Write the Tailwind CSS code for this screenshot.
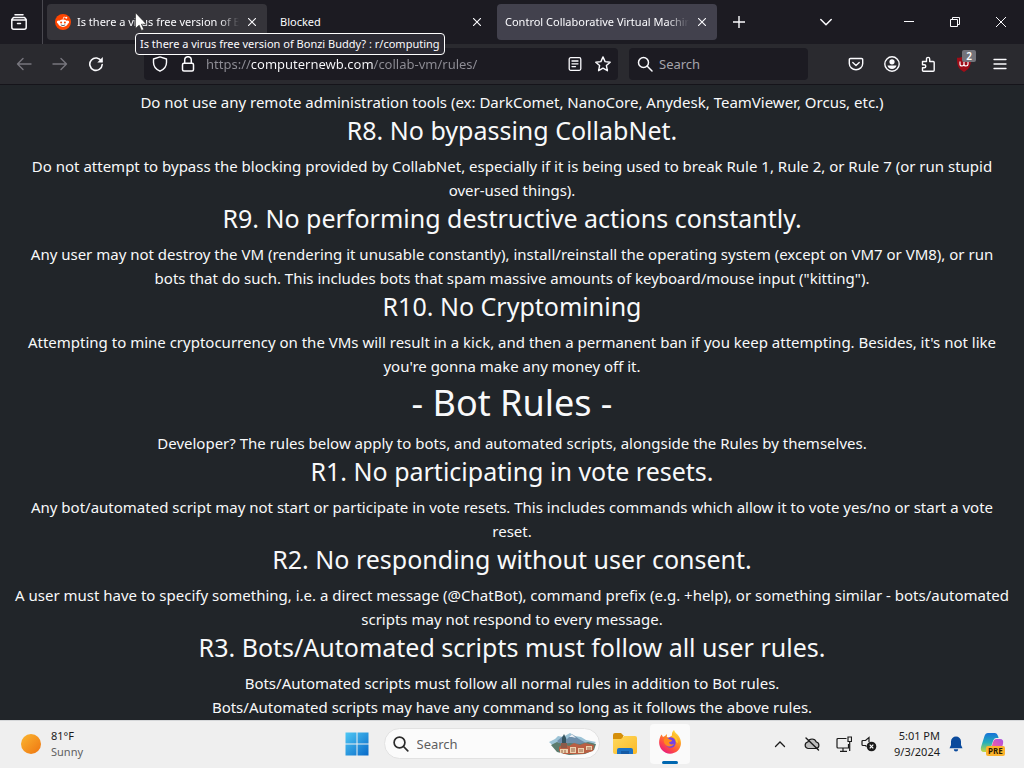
<!DOCTYPE html>
<html lang="en">
<head>
    <meta charset="UTF-8">
    <meta name="viewport" content="width=device-width, initial-scale=1.0">
    <title>Control Collaborative Virtual Machines</title>
    <script src="https://cdn.jsdelivr.net/npm/@tailwindcss/browser@4"></script>
</head>
<body class="h-screen flex flex-col overflow-hidden bg-[#212529] font-['Noto_Sans',sans-serif]">

    <!-- Browser chrome -->
    <header class="relative shrink-0 text-[#fbfbfe]">
        <!-- Tab strip -->
        <div class="flex h-11 bg-[#1c1b22] text-[11px]">
            <button aria-label="Firefox View" class="w-[43px] shrink-0 flex items-center justify-center border-r border-[#4a4950]">
                <svg class="size-4 mr-1" viewBox="0 0 16 16" fill="none" stroke="currentColor" stroke-width="1.5" stroke-linecap="round" stroke-linejoin="round">
                    <path d="M4 .8h8M.8 5.500 2.500 3.500h11l1.700 2V13.200q0 2-2 2H2.800q-2 0-2-2zM.8 6h14.400M6.500 9.500h3" />
                </svg>
            </button>
            <div class="flex items-center gap-[5px] pl-1">
                <div class="flex items-center w-[220px] h-9 pl-2 rounded bg-[#35343a]">
                    <svg class="size-4 mr-1.5 shrink-0" viewBox="0 0 16 16">
                        <circle cx="8" cy="8" r="8" fill="#ff4500" />
                        <circle cx="3.4" cy="8" r="1.5" fill="#fff" />
                        <circle cx="12.6" cy="8" r="1.5" fill="#fff" />
                        <ellipse cx="8" cy="9.2" rx="4.8" ry="3.7" fill="#fff" />
                        <path d="M8 5.6 8.8 3l2 .5" fill="none" stroke="#fff" stroke-width=".7" />
                        <circle cx="11.3" cy="3.7" r="1" fill="#fff" />
                        <circle cx="6.1" cy="8.6" r="1" fill="#ff4500" />
                        <circle cx="9.9" cy="8.6" r="1" fill="#ff4500" />
                        <path d="M5.8 10.9q2.2 1.5 4.4 0" fill="none" stroke="#222" stroke-width=".7" />
                    </svg>
                    <button class="flex-1 text-left whitespace-nowrap overflow-hidden [mask-image:linear-gradient(to_right,black_88%,transparent)]">Is there a virus free version of Bonzi Buddy? : r/computing</button>
                    <button aria-label="Close tab" class="w-7 h-6 pr-0.5 flex items-center justify-center">
                        <svg class="size-2" viewBox="0 0 8 8" stroke="currentColor" stroke-width="1.1"><path d="M0 0l8 8M8 0L0 8" /></svg>
                    </button>
                </div>
                <div class="flex items-center w-[220px] h-9 pl-2 rounded">
                    <button class="flex-1 text-left whitespace-nowrap overflow-hidden">Blocked</button>
                    <button aria-label="Close tab" class="w-7 h-6 pr-0.5 flex items-center justify-center">
                        <svg class="size-2" viewBox="0 0 8 8" stroke="currentColor" stroke-width="1.1"><path d="M0 0l8 8M8 0L0 8" /></svg>
                    </button>
                </div>
                <div class="flex items-center w-[220px] h-9 pl-2 rounded bg-[#42414d]">
                    <button class="flex-1 text-left whitespace-nowrap overflow-hidden [mask-image:linear-gradient(to_right,black_88%,transparent)]">Control Collaborative Virtual Machines</button>
                    <button aria-label="Close tab" class="w-7 h-6 pr-0.5 flex items-center justify-center">
                        <svg class="size-2" viewBox="0 0 8 8" stroke="currentColor" stroke-width="1.1"><path d="M0 0l8 8M8 0L0 8" /></svg>
                    </button>
                </div>
            </div>
            <button aria-label="New tab" class="w-11 flex items-center justify-center">
                <svg class="size-3" viewBox="0 0 12 12" stroke="currentColor" stroke-width="1.4"><path d="M6 0v12M0 6h12" /></svg>
            </button>
            <div class="ml-auto flex">
                <button aria-label="List all tabs" class="w-9 mr-[42px] flex items-center justify-center">
                    <svg class="size-3" viewBox="0 0 12 12" fill="none" stroke="currentColor" stroke-width="1.5" stroke-linecap="round" stroke-linejoin="round"><path d="M.8 3.5 6 8.7l5.2-5.2" /></svg>
                </button>
                <button aria-label="Minimize" class="w-[46px] flex items-center justify-center">
                    <svg class="size-2.5" viewBox="0 0 10 10" stroke="currentColor"><path d="M0 4.5h10" /></svg>
                </button>
                <button aria-label="Restore" class="w-[46px] flex items-center justify-center">
                    <svg class="size-2.5" viewBox="0 0 10 10" fill="none" stroke="currentColor"><path d="M.5 2.5h7v7h-7zM2.5 2.5v-2h7v7h-2" /></svg>
                </button>
                <button aria-label="Close" class="w-[46px] flex items-center justify-center">
                    <svg class="size-2.5" viewBox="0 0 10 10" stroke="currentColor"><path d="M0 0l10 10M10 0L0 10" /></svg>
                </button>
            </div>
        </div>

        <!-- Toolbar -->
        <div class="flex items-center h-[41px] px-1.5 bg-[#2a2a2f] border-b border-[#15141a]">
            <button aria-label="Back" class="w-9 flex justify-center text-[#77767e]">
                <svg class="size-4" viewBox="0 0 16 16" fill="none" stroke="currentColor" stroke-width="1.4" stroke-linecap="round" stroke-linejoin="round"><path d="M15 8H1.5M7 2.5 1.5 8 7 13.5" /></svg>
            </button>
            <button aria-label="Forward" class="w-9 flex justify-center text-[#77767e]">
                <svg class="size-4" viewBox="0 0 16 16" fill="none" stroke="currentColor" stroke-width="1.4" stroke-linecap="round" stroke-linejoin="round"><path d="M1 8h13.500M9 2.500 14.500 8 9 13.500" /></svg>
            </button>
            <button aria-label="Reload" class="w-9 flex justify-center">
                <svg class="size-4" viewBox="0 0 16 16" fill="none" stroke="currentColor" stroke-width="1.6" stroke-linecap="round"><path d="M13.500 5.300A6.200 6.200 0 1 0 14.200 8.500" /><path d="M14.800 1v5.500H9.300z" fill="currentColor" stroke="none" /></svg>
            </button>
            <div class="flex-1 min-w-0 ml-[30px] mr-[11px] h-8 flex items-center rounded bg-[#1c1b22]">
                <button aria-label="Tracking protection" class="w-8 shrink-0 flex justify-center">
                    <svg class="size-4" viewBox="0 0 16 16" fill="none" stroke="currentColor" stroke-width="1.4" stroke-linejoin="round"><path d="M8 .9 14.500 3v3.500c0 4-2.500 7-6.500 8.700C4 13.500 1.500 10.500 1.500 6.500V3z" /></svg>
                </button>
                <button aria-label="Site information" class="w-6 shrink-0 flex justify-center">
                    <svg class="size-4" viewBox="0 0 16 16" fill="none" stroke="currentColor" stroke-width="1.5"><rect x="2.500" y="7.200" width="11" height="7.800" rx="1.500" /><path d="M4.700 7V4a3.300 3.300 0 0 1 6.600 0v3" /></svg>
                </button>
                <input type="text" aria-label="Address" value="https://computernewb.com/collab-vm/rules/" class="flex-1 min-w-0 ml-1.5 h-8 text-[13px] outline-none text-transparent bg-clip-text bg-[linear-gradient(90deg,#8f8e96_45px,#fbfbfe_45px,#fbfbfe_167px,#8f8e96_167px)]">
                <button aria-label="Reader view" class="w-7 shrink-0 flex justify-center">
                    <svg class="size-3.5" viewBox="0 0 14 14" fill="none" stroke="currentColor" stroke-width="1.3" stroke-linecap="round"><rect x="1.200" y=".7" width="11.600" height="12.600" rx="1.500" /><path d="M4 4h6M4 6.800h6M4 9.600h3.500" /></svg>
                </button>
                <button aria-label="Bookmark" class="w-7 mr-px shrink-0 flex justify-center">
                    <svg class="size-4" viewBox="0 0 16 16" fill="none" stroke="currentColor" stroke-width="1.4" stroke-linejoin="round"><path d="M8 .9l2.100 4.700 5.100.6-3.800 3.400 1 5.100L8 12.200l-4.400 2.500 1-5.100L.8 6.200l5.100-.6z" /></svg>
                </button>
            </div>
            <div class="w-[179px] shrink-0 mr-[30px] h-8 flex items-center pl-2 rounded bg-[#1c1b22]">
                <svg class="size-4 shrink-0" viewBox="0 0 16 16" fill="none" stroke="currentColor" stroke-width="1.500" stroke-linecap="round"><circle cx="6.500" cy="6.500" r="5" /><path d="M10.300 10.300 15 15" /></svg>
                <input type="text" aria-label="Search" placeholder="Search" class="flex-1 min-w-0 ml-1.5 h-8 text-[13px] outline-none placeholder:text-[#a5a4ab]">
            </div>
            <button aria-label="Pocket" class="w-9 flex justify-center">
                <svg class="size-4" viewBox="0 0 16 16" fill="none" stroke="currentColor" stroke-width="1.400" stroke-linecap="round" stroke-linejoin="round"><path d="M2.500 2.500h11a1.200 1.200 0 0 1 1.200 1.200V7.500a6.700 6.200 0 0 1-13.400 0V3.700a1.200 1.200 0 0 1 1.200-1.200z" /><path d="M4.800 6.500 8 9.400l3.200-2.900" /></svg>
            </button>
            <button aria-label="Account" class="w-9 flex justify-center">
                <svg class="size-4" viewBox="0 0 16 16" fill="currentColor"><circle cx="8" cy="8" r="7.200" fill="none" stroke="currentColor" stroke-width="1.400" /><circle cx="8" cy="5.800" r="2.600" /><path d="M3.500 9.500h9c-.5 2.300-2.200 3.500-4.500 3.500s-4-1.200-4.500-3.500z" /></svg>
            </button>
            <button aria-label="Extensions" class="w-9 flex justify-center">
                <svg class="size-4" viewBox="0 0 16 16" fill="none" stroke="currentColor" stroke-width="1.400" stroke-linejoin="round"><path d="M2.500 5.500h4V3a1.600 1.600 0 0 1 3.200 0v2.500h3.500q1 0 1 1v7.700q0 1-1 1H3.500q-1 0-1-1v-2.400h1.800a1.500 1.500 0 0 0 0-3H2.500z" /></svg>
            </button>
            <button aria-label="uBlock Origin" class="relative w-9 flex justify-center">
                <svg class="size-4" viewBox="0 0 16 16"><path d="M8 0c2 1.400 4.500 1.800 7 1.800 0 7-.5 10.500-7 14.200C1.500 12.300 1 8.800 1 1.800 3.500 1.800 6 1.400 8 0z" fill="#a00d18" /><path d="M4 5.500v2.800q0 1.700 2 1.700t2-1.700V6v2.300q0 1.700 2 1.700t2-1.700V5.500" fill="none" stroke="#fff" stroke-width="1.200" /></svg>
                <span class="absolute -top-1.5 right-1.5 w-3.5 h-3 rounded-xs bg-[#73737a] text-white text-[10px] leading-3 font-semibold">2</span>
            </button>
            <button aria-label="Menu" class="w-9 flex justify-center">
                <svg class="size-4" viewBox="0 0 16 16" stroke="currentColor" stroke-width="1.300" stroke-linecap="round"><path d="M2 3.500h12M2 8h12M2 12.500h12" /></svg>
            </button>
        </div>

        <!-- Tab tooltip and mouse pointer -->
        <div role="tooltip" class="absolute left-[135px] top-[33px] px-1 border border-white rounded bg-[#2b2a33] text-[11px] leading-5 whitespace-nowrap">Is there a virus free version of Bonzi Buddy? : r/computing</div>
        <svg class="absolute left-[135px] top-3 w-3 h-[19px]" viewBox="0 0 12 19"><path d="M.5.700v15.800l3.600-3.400 2.400 5.300 2.300-1-2.400-5.200h5z" fill="#fff" stroke="#222" stroke-width=".6" /></svg>
    </header>

    <!-- Rules page -->
    <main class="flex-1 min-h-0 overflow-hidden pt-[5px] px-3.5 text-center text-[15px] leading-6 text-[#f8f9fa]">
        <p>Do not use any remote administration tools (ex: DarkComet, NanoCore, Anydesk, TeamViewer, Orcus, etc.)</p>
        <h3 class="mb-2 text-[25px] leading-8">R8. No bypassing CollabNet.</h3>
        <p>Do not attempt to bypass the blocking provided by CollabNet, especially if it is being used to break Rule 1, Rule 2, or Rule 7 (or run stupid over-used things).</p>
        <h3 class="mb-2 text-[25px] leading-8">R9. No performing destructive actions constantly.</h3>
        <p>Any user may not destroy the VM (rendering it unusable constantly), install/reinstall the operating system (except on VM7 or VM8), or run bots that do such. This includes bots that spam massive amounts of keyboard/mouse input ("kitting").</p>
        <h3 class="mb-2 text-[25px] leading-8">R10. No Cryptomining</h3>
        <p>Attempting to mine cryptocurrency on the VMs will result in a kick, and then a permanent ban if you keep attempting. Besides, it's not like you're gonna make any money off it.</p>
        <h2 class="mb-1 text-4xl leading-[49px]">- Bot Rules -</h2>
        <p>Developer? The rules below apply to bots, and automated scripts, alongside the Rules by themselves.</p>
        <h3 class="mb-2 text-[25px] leading-8">R1. No participating in vote resets.</h3>
        <p>Any bot/automated script may not start or participate in vote resets. This includes commands which allow it to vote yes/no or start a vote reset.</p>
        <h3 class="mb-2 text-[25px] leading-8">R2. No responding without user consent.</h3>
        <p>A user must have to specify something, i.e. a direct message (@ChatBot), command prefix (e.g. +help), or something similar - bots/automated scripts may not respond to every message.</p>
        <h3 class="mb-2 text-[25px] leading-8">R3. Bots/Automated scripts must follow all user rules.</h3>
        <p>Bots/Automated scripts must follow all normal rules in addition to Bot rules.<br>Bots/Automated scripts may have any command so long as it follows the above rules.</p>
    </main>

    <!-- Taskbar -->
    <footer class="shrink-0 h-12 pb-0.5 grid grid-cols-[1fr_auto_1fr] items-center bg-[#efefef] border-t border-[#d5d7d9] text-[11px] leading-4 text-[#1b1b1b]">
        <button class="flex items-center gap-2.5 pl-[21px] text-left">
            <svg class="size-5" viewBox="0 0 20 20">
                <defs><linearGradient id="sun" x1="0" y1="0" x2="1" y2="1"><stop stop-color="#fbb731" /><stop offset="1" stop-color="#ee7410" /></linearGradient></defs>
                <circle cx="10" cy="10" r="10" fill="url(#sun)" />
            </svg>
            <span>81°F<br><span class="text-[#606060]">Sunny</span></span>
        </button>
        <div class="flex items-center pl-2.5">
            <button aria-label="Start" class="mr-[15px]">
                <svg class="size-6" viewBox="0 0 24 24">
                    <defs><linearGradient id="win" x1="0" y1="0" x2="1" y2="1"><stop stop-color="#4fc8f5" /><stop offset="1" stop-color="#0869c8" /></linearGradient></defs>
                    <path d="M.5.500h11v11H.5zM12.500.500h11v11h-11zM.5 12.500h11v11H.5zM12.500 12.500h11v11h-11z" fill="url(#win)" />
                </svg>
            </button>
            <div class="w-[216px] h-[31px] mr-3 flex items-center pl-2 rounded-full bg-[#fbfbfb] border border-[#e2e2e2]">
                <svg class="size-4 shrink-0" viewBox="0 0 16 16" fill="none" stroke="#2b2b2b" stroke-width="1.700" stroke-linecap="round"><circle cx="6.500" cy="6.500" r="5.400" /><path d="M10.500 10.500 14.800 14.800" /></svg>
                <input type="text" aria-label="Search Windows" placeholder="Search" class="flex-1 min-w-0 ml-2 text-[13px] outline-none placeholder:text-[#5f5f5f]">
                <svg class="w-12 h-6 mr-0.5 shrink-0" viewBox="0 0 48 24">
                    <path d="M0 10 6 7l3-3 5 1 7-4 5 3 6 1 5 3 10 2-6 5-8 4-22 1z" fill="#9cc3d6" />
                    <path d="M8 9l6-5 4 3 5-5 7 5 7 4-9 2H12z" fill="#6f8fab" />
                    <path d="M20 5l3-3 4 4-4-1z" fill="#e8eef3" />
                    <path d="M2 13l6-3 5 2 8-1 10 1 8-2 8 2-2 6-9 4-16 1-12-3z" fill="#5c7c6e" />
                    <path d="M10 15l4-3 6 2 5-3 6 2 5-2 9 2-1 6-10 3H15l-5-3z" fill="#b95f43" />
                    <path d="M11 17h8v4h-8zM21 15h6v6h-6zM29 16h6v5h-6zM37 14h6v4h-6z" fill="#edd2ae" />
                    <path d="M13 18v3M16 18v3M23 16v4M25 16v4M31 17v3M33 17v3M39 15v3M41 15v3" stroke="#864830" stroke-width=".8" />
                    <path d="M13 12V6l2-4 2 4v6z" fill="#35545e" /><path d="M12 11h6v5h-6z" fill="#8c5b49" />
                </svg>
            </div>
            <button aria-label="File Explorer" class="mr-3">
                <svg class="size-[26px]" viewBox="0 0 26 26">
                    <defs><linearGradient id="folder" x1="0" y1="0" x2="1" y2="1"><stop stop-color="#ffd95c" /><stop offset="1" stop-color="#fbb928" /></linearGradient></defs>
                    <path d="M1 4q0-2 2-2h6l3 3h-1v4H1z" fill="#d58f0b" />
                    <path d="M1 8h8l3-3h11q2 0 2 2v14q0 2-2 2H3q-2 0-2-2z" fill="url(#folder)" />
                    <path d="M5 23v-4q0-2 2-2h12q2 0 2 2v4z" fill="#1c72c5" /><path d="M9 20h8v3H9z" fill="#145aa5" />
                </svg>
            </button>
            <button aria-label="Firefox" class="w-10 h-10 pt-1.5 flex flex-col items-center justify-between rounded bg-[#fafafa]">
                <svg class="size-6" viewBox="0 0 24 24">
                    <defs>
                        <linearGradient id="fox" x1=".85" y1="0" x2=".2" y2="1"><stop stop-color="#fff14a" /><stop offset=".35" stop-color="#ff9a1f" /><stop offset=".7" stop-color="#ff4a45" /><stop offset="1" stop-color="#e31587" /></linearGradient>
                    </defs>
                    <path d="M3.500 4.500 5 7l2-1 2-2-.2 3 2.200.5 3-2c-.3-2 .2-4 2-5.500 1 3 3.500 4 5 6.500C23.500 10.500 24 16 20 20.500c-5 4.500-12 4-16-.5-4-4.500-3.500-11-.5-15.500z" fill="url(#fox)" />
                    <circle cx="12.500" cy="12.500" r="5.200" fill="#7542e5" />
                    <path d="M6 9c2-1.500 4-1 5.500.5l2.500.5c0 1.500-2 2-3 2.500.5 2 3 2.500 5 1.300-1 3-6 4-8.500 1C6 13 5.500 11 6 9z" fill="#ff8a1e" />
                    <path d="M13 6.500c3 .3 5 2.500 5 5.500l2 1c0-4-2-7-5-8z" fill="#ffc52b" />
                </svg>
                <span class="w-4 h-[3px] rounded-full bg-[#0067b0]"></span>
            </button>
        </div>
        <div class="flex items-center justify-end pr-5">
            <button aria-label="Show hidden icons" class="w-8 flex justify-center">
                <svg class="size-3" viewBox="0 0 12 12" fill="none" stroke="currentColor" stroke-width="1.300" stroke-linecap="round"><path d="M1.500 8.500 6 4l4.500 4.500" /></svg>
            </button>
            <button aria-label="OneDrive" class="w-8 flex justify-center">
                <svg class="w-4 h-3.5" viewBox="0 0 16 14" fill="none" stroke="currentColor" stroke-width="1.200" stroke-linecap="round"><path d="M4 11.500a3.300 3.300 0 0 1-.2-6.500 4.500 4.500 0 0 1 8.500 0 3.300 3.300 0 0 1-.3 6.500z" fill="#bdbdbd" /><path d="M2 1l12.500 12" stroke-width="1.400" /></svg>
            </button>
            <button aria-label="Network" class="w-8 flex justify-center">
                <svg class="size-4" viewBox="0 0 16 16" fill="none" stroke="currentColor" stroke-width="1.200"><path d="M10.500 2.500H2q-1 0-1 1v7.500q0 1 1 1h10.500V8M7 12v3M4 15.300h7" /><path d="M12 1h3.500v4.500H12zM13.700 5.500v9.500" /></svg>
            </button>
            <button aria-label="Volume" class="w-[18px] flex justify-center">
                <svg class="size-4" viewBox="0 0 16 16" fill="none" stroke="currentColor" stroke-width="1.200"><path d="M8 6V1.500L4.500 4.500H2Q1 4.500 1 5.500v3q0 1 1 1h2.500l1 1" /><circle cx="10.500" cy="10.500" r="4.800" fill="currentColor" stroke="none" /><path d="M8.700 8.700l3.600 3.600M12.300 8.700l-3.600 3.600" stroke="#fff" /></svg>
            </button>
            <button class="w-[62px] text-right">5:01 PM<br>9/3/2024</button>
            <button aria-label="Notifications" class="w-8 flex justify-center">
                <svg class="size-4" viewBox="0 0 16 16" fill="#0a4a9c"><path d="M8 .5a5 5 0 0 1 5 5V9l1.500 3.200H1.500L3 9V5.500a5 5 0 0 1 5-5zM5.800 13.200h4.400a2.200 2.200 0 0 1-4.400 0z" /></svg>
            </button>
            <button aria-label="Copilot" class="relative w-6 ml-2">
                <svg class="size-6" viewBox="0 0 24 24">
                    <defs>
                        <linearGradient id="cpa" x1="0" y1="0" x2="0" y2="1"><stop stop-color="#1772d8" /><stop offset=".5" stop-color="#24aebb" /><stop offset="1" stop-color="#c4d940" /></linearGradient>
                        <linearGradient id="cpb" x1="1" y1="0" x2="0" y2="1"><stop stop-color="#a653e8" /><stop offset=".5" stop-color="#e85bac" /><stop offset="1" stop-color="#ff9557" /></linearGradient>
                    </defs>
                    <path d="M8 1h7q2 0 3 3l.6 2H16q-2 0-3 3l-2.500 8q-1 3-3.500 3H4q-4 0-3-5L4.500 4Q5.500 1 8 1z" fill="url(#cpa)" />
                    <path d="M16 7h4q4 0 3 5l-2.500 8q-1 3-3.500 3h-7q-2 0-2-2 2-.5 3-4l2-7q1-3 3-3z" fill="url(#cpb)" />
                </svg>
                <span class="absolute left-1.5 top-3.5 px-0.5 rounded-xs bg-[#fcb32c] text-[8px] leading-[10px] font-bold text-[#2b1c00]">PRE</span>
            </button>
        </div>
    </footer>
</body>
</html>
